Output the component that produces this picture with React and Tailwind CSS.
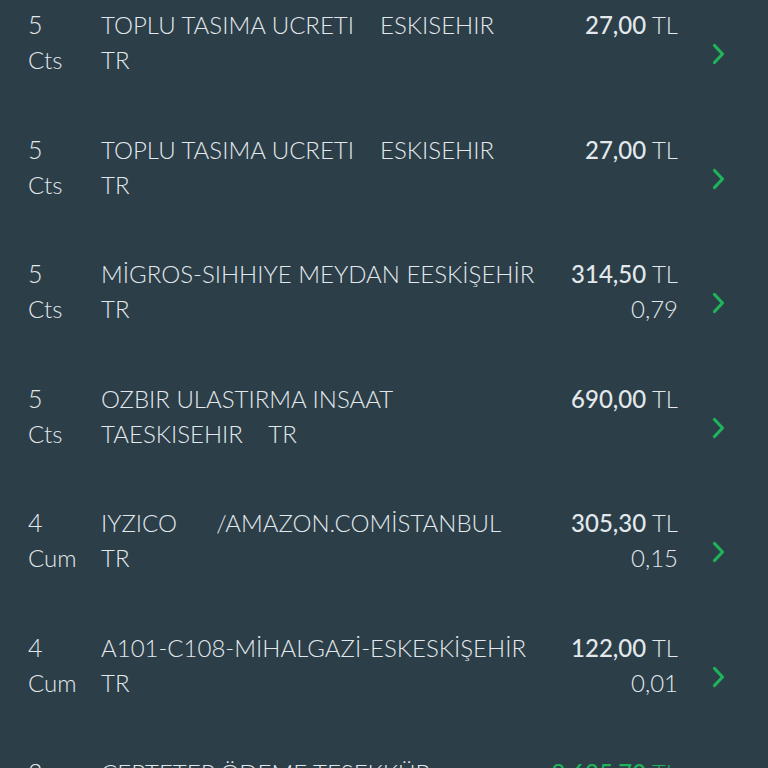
import React from 'react';

const rows = [
  { day: '5', mon: 'Cts', l1: 'TOPLU TASIMA UCRETI    ESKISEHIR', l2: 'TR', amt: '27,00', sub: '' },
  { day: '5', mon: 'Cts', l1: 'TOPLU TASIMA UCRETI    ESKISEHIR', l2: 'TR', amt: '27,00', sub: '' },
  { day: '5', mon: 'Cts', l1: 'MİGROS-SIHHIYE MEYDAN EESKİŞEHİR', l2: 'TR', amt: '314,50', sub: '0,79' },
  { day: '5', mon: 'Cts', l1: 'OZBIR ULASTIRMA INSAAT', l2: 'TAESKISEHIR    TR', amt: '690,00', sub: '' },
  { day: '4', mon: 'Cum', l1: 'IYZICO      /AMAZON.COMİSTANBUL', l2: 'TR', amt: '305,30', sub: '0,15' },
  { day: '4', mon: 'Cum', l1: 'A101-C108-MİHALGAZİ-ESKESKİŞEHİR', l2: 'TR', amt: '122,00', sub: '0,01' },
  { day: '3', mon: '', l1: 'CEPTETEP ÖDEME TEŞEKKÜR', l2: '', amt: '8.625,70', sub: '', green: true },
];

const Chevron = () => (
  <svg width="16" height="24" viewBox="0 0 16 24" fill="none">
    <path d="M3.5 3.5l8 8.5-8 8.5" stroke="#1fb35a" strokeWidth="3.2" strokeLinecap="round" strokeLinejoin="round" />
  </svg>
);

const Row = ({ r }) => (
  <div className="flex h-[124.6px] shrink-0 items-start">
    <div className="w-[101px] shrink-0 pl-[28px] leading-[35px]">
      <div className="text-[25px]">{r.day}</div>
      <div>{r.mon}</div>
    </div>
    <div className="min-w-0 flex-1 whitespace-pre leading-[35px]">
      <div>{r.l1}</div>
      <div>{r.l2}</div>
    </div>
    <div className="w-[140px] shrink-0 text-right leading-[35px]">
      <div className={r.green ? 'text-[#1fb35a]' : ''}>
        <span className="font-medium">{r.amt}</span> TL
      </div>
      <div>{r.sub}</div>
    </div>
    <div className="w-[90px] shrink-0 pl-[33px] pt-[35px]">
      <Chevron />
    </div>
  </div>
);

export default function App() {
  return (
    <div
      className="flex h-[768px] w-[768px] flex-col overflow-hidden bg-[#2c3e48] pt-[7px] text-[24px] font-light text-[#e2e8ec]"
      style={{ fontFamily: 'Lato, "Noto Sans", sans-serif' }}
    >
      {rows.map((r, i) => (
        <Row key={i} r={r} />
      ))}
    </div>
  );
}
